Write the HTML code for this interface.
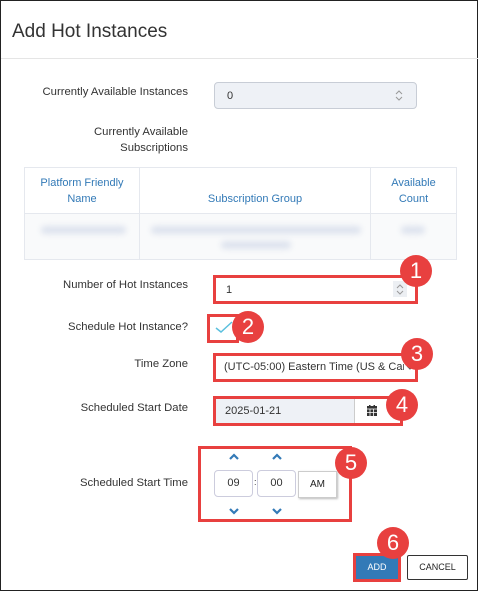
<!DOCTYPE html><html><head><style>
*{box-sizing:border-box;margin:0;padding:0}
body{width:478px;height:591px;overflow:hidden;background:#fff;font-family:"Liberation Sans",sans-serif;position:relative;border:1px solid #222;color:#333}
.a{position:absolute}
.lbl{position:absolute;right:289px;font-size:11.3px;text-align:right;color:#333;line-height:16px;white-space:nowrap}
.red{position:absolute;border:3px solid #e8403f}
.b{position:absolute;width:32px;height:32px;border-radius:50%;background:#e8403f;color:#fff;font-size:22px;text-align:center;line-height:32px}
.th{position:absolute;color:#337ab7;font-size:11px;text-align:center;line-height:16px}
.blur{position:absolute;background:#dde3ee;filter:blur(3px);height:8px;border-radius:4px}
.chev{position:absolute}
</style></head><body>
<div class="a" style="left:11px;top:20px;font-size:19px;color:#333">Add Hot Instances</div>
<div class="a" style="left:0;top:57px;width:478px;height:1px;background:#e5e5e5"></div>
<div class="lbl" style="top:83px">Currently Available Instances</div>
<div class="a" style="left:213px;top:81px;width:203px;height:27px;background:#eef1f6;border:1px solid #c8cdd6;border-radius:4px;font-size:11px;padding:7px 12px">0</div>
<svg class="a" style="left:394px;top:88px" width="8" height="13"><path d="M1 5 L4 2 L7 5 M1 8 L4 11 L7 8" stroke="#999" fill="none"/></svg>
<div class="lbl" style="top:123px">Currently Available<br>Subscriptions</div>
<div class="a" style="left:23px;top:166px;width:433px;height:93px;border:1px solid #e5e8ee"></div>
<div class="a" style="left:23px;top:212px;width:433px;height:47px;background:#f9fafb;border:1px solid #e5e8ee"></div>
<div class="a" style="left:138px;top:166px;width:1px;height:93px;background:#e5e8ee"></div>
<div class="a" style="left:369px;top:166px;width:1px;height:93px;background:#e5e8ee"></div>
<div class="th" style="left:24px;width:114px;top:174px">Platform Friendly<br>Name</div>
<div class="th" style="left:139px;width:230px;top:190px">Subscription Group</div>
<div class="th" style="left:370px;width:85px;top:174px">Available<br>Count</div>
<div class="blur" style="left:40px;top:225px;width:85px"></div>
<div class="blur" style="left:150px;top:225px;width:210px"></div>
<div class="blur" style="left:220px;top:240px;width:70px"></div>
<div class="blur" style="left:400px;top:225px;width:24px"></div>
<div class="lbl" style="top:276px">Number of Hot Instances</div>
<div class="red" style="left:212px;top:274px;width:205px;height:29px"></div>
<div class="a" style="left:225px;top:283px;font-size:11px">1</div>
<div class="a" style="left:392px;top:280px;width:14px;height:16px;background:#eceff3"></div>
<svg class="a" style="left:395px;top:282px" width="8" height="13"><path d="M1 5 L4 2 L7 5 M1 8 L4 11 L7 8" stroke="#999" fill="none"/></svg>
<div class="lbl" style="top:318px">Schedule Hot Instance?</div>
<div class="red" style="left:206px;top:313px;width:32px;height:29px"></div>
<svg class="a" style="left:213px;top:318px" width="20" height="16"><path d="M2 9 L7 13 L18 3" stroke="#5bc0de" stroke-width="1.5" fill="none"/></svg>
<div class="lbl" style="top:355px">Time Zone</div>
<div class="red" style="left:212px;top:352px;width:205px;height:29px"></div>
<div class="a" style="left:223px;top:360px;width:180px;overflow:hidden;font-size:11px;white-space:nowrap">(UTC-05:00) Eastern Time (US &amp; Can</div>
<svg class="a" style="left:405px;top:364px" width="8" height="6"><path d="M1 1 L4 4 L7 1" stroke="#555" fill="none"/></svg>
<div class="lbl" style="top:399px">Scheduled Start Date</div>
<div class="red" style="left:212px;top:395px;width:190px;height:30px"></div>
<div class="a" style="left:215px;top:398px;width:138px;height:24px;background:#eef1f6"></div>
<div class="a" style="left:353px;top:398px;width:1px;height:24px;background:#ccc"></div>
<div class="a" style="left:224px;top:404px;font-size:11px">2025-01-21</div>
<svg class="a" style="left:366px;top:404px" width="10" height="11"><rect x="0" y="1" width="10" height="10" fill="#333"/><path d="M0 4 H10 M3 4 V11 M6.5 4 V11 M0 7.5 H10" stroke="#fff" stroke-width="0.8"/><rect x="2" y="0" width="1.5" height="2" fill="#333"/><rect x="6.5" y="0" width="1.5" height="2" fill="#333"/></svg>
<div class="lbl" style="top:474px">Scheduled Start Time</div>
<div class="red" style="left:197px;top:445px;width:154px;height:76px"></div>
<svg class="chev" style="left:228px;top:452px" width="10" height="7"><path d="M1 6 L5 2 L9 6" stroke="#337ab7" stroke-width="2.2" fill="none"/></svg>
<svg class="chev" style="left:271px;top:452px" width="10" height="7"><path d="M1 6 L5 2 L9 6" stroke="#337ab7" stroke-width="2.2" fill="none"/></svg>
<svg class="chev" style="left:228px;top:507px" width="10" height="7"><path d="M1 1 L5 5 L9 1" stroke="#337ab7" stroke-width="2.2" fill="none"/></svg>
<svg class="chev" style="left:271px;top:507px" width="10" height="7"><path d="M1 1 L5 5 L9 1" stroke="#337ab7" stroke-width="2.2" fill="none"/></svg>
<div class="a" style="left:213px;top:469px;width:39px;height:27px;border:1px solid #ccd;border-radius:4px;font-size:11px;text-align:center;line-height:25px">09</div>
<div class="a" style="left:253px;top:476px;font-size:9px">:</div>
<div class="a" style="left:256px;top:469px;width:39px;height:27px;border:1px solid #ccd;border-radius:4px;font-size:11px;text-align:center;line-height:25px">00</div>
<div class="a" style="left:297px;top:470px;width:39px;height:27px;border:1px solid #ccc;box-shadow:1px 1px 2px #bbb;font-size:10px;text-align:center;line-height:25px;color:#222">AM</div>
<div class="a" style="left:352px;top:552px;width:48px;height:29px;border:3px solid #e8403f;background:#337ab7;color:#fff;font-size:9px;text-align:center;line-height:23px">ADD</div>
<div class="a" style="left:406px;top:554px;width:61px;height:25px;border:1px solid #333;border-radius:2px;font-size:9px;text-align:center;line-height:23px;color:#222">CANCEL</div>
<div class="b" style="left:399px;top:254px">1</div>
<div class="b" style="left:231px;top:310px">2</div>
<div class="b" style="left:400px;top:337px">3</div>
<div class="b" style="left:385px;top:388px">4</div>
<div class="b" style="left:334px;top:446px">5</div>
<div class="b" style="left:376px;top:526px">6</div>
</body></html>
